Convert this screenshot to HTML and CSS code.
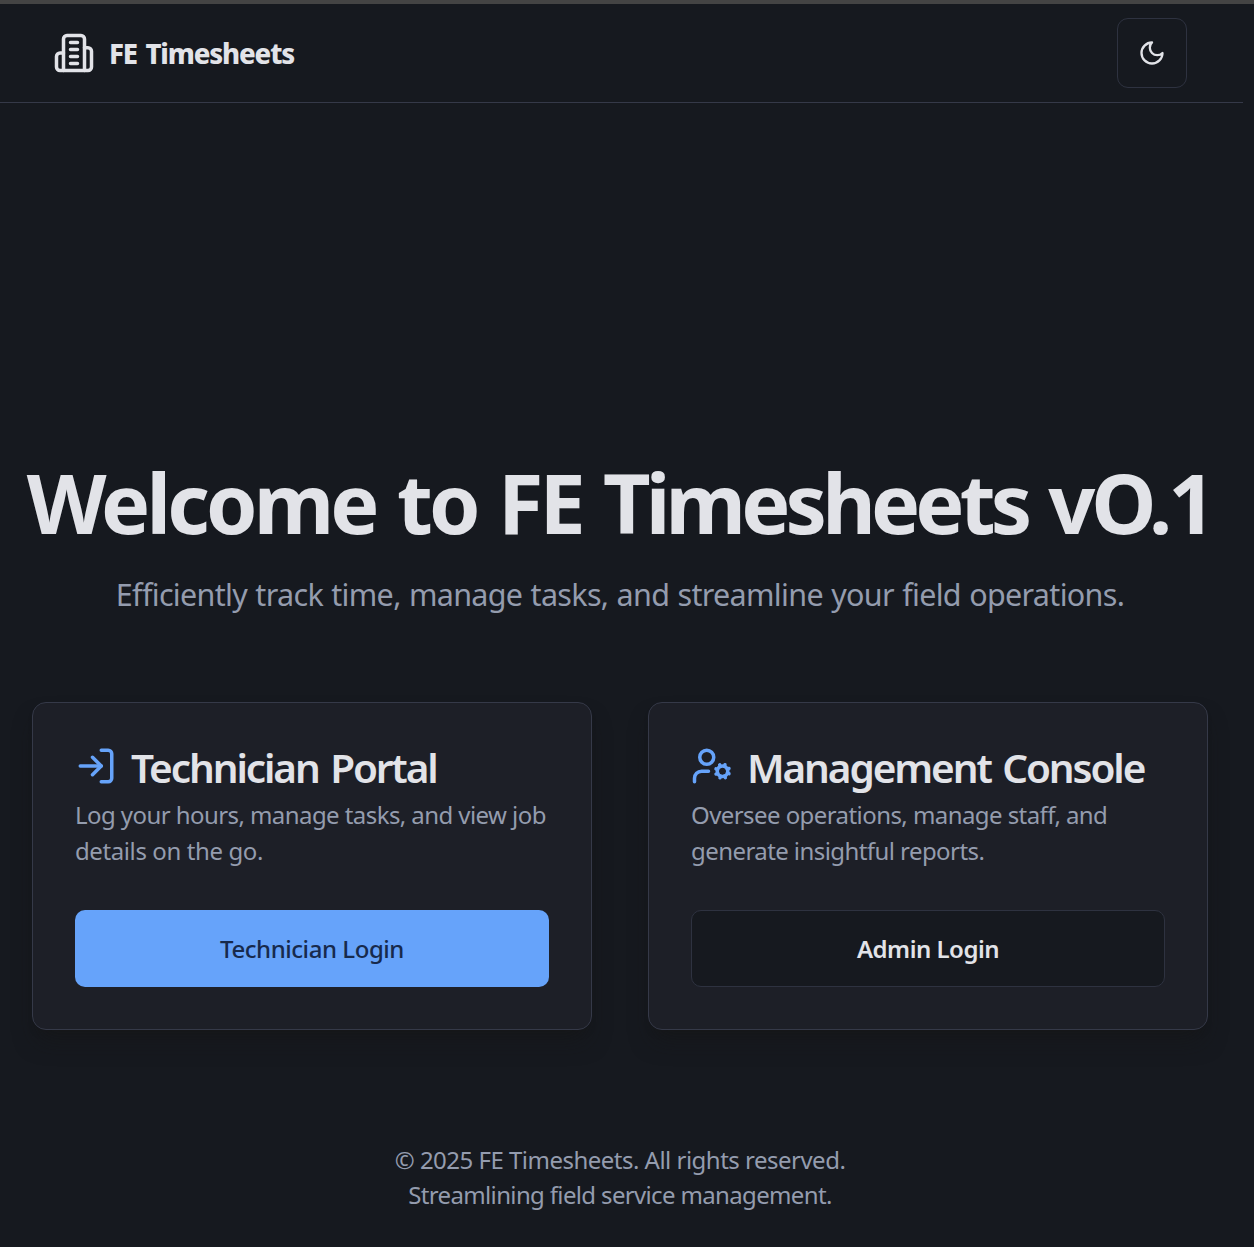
FILE: index.html
```html
<!DOCTYPE html>
<html lang="en">
<head>
<meta charset="utf-8">
<title>FE Timesheets</title>
<link rel="stylesheet" href="styles.css">
</head>
<body>
<div class="page">
  <header class="header">
    <a class="brand">
      <svg class="icon" viewBox="0 0 24 24"><path d="M6 22V4a2 2 0 0 1 2-2h8a2 2 0 0 1 2 2v18Z"/><path d="M6 12H4a2 2 0 0 0-2 2v6a2 2 0 0 0 2 2h2"/><path d="M18 9h2a2 2 0 0 1 2 2v9a2 2 0 0 1-2 2h-2"/><path d="M10 6h4M10 10h4M10 14h4M10 18h4"/></svg>
      <span class="brand-name">FE Timesheets</span>
    </a>
    <button class="theme-toggle" aria-label="Toggle theme">
      <svg class="icon icon-small" viewBox="0 0 24 24"><path d="M12 3a6 6 0 0 0 9 9 9 9 0 1 1-9-9Z"/></svg>
    </button>
  </header>
  <main class="main">
    <h1 class="hero-title"><span class="hero-word">Welcome to FE</span> <span class="hero-product">Timesheets</span> vO.1</h1>
    <p class="hero-text">Efficiently track time, manage tasks, and streamline your field operations.</p>
    <div class="cards">
      <section class="card">
        <h2 class="card-title">
          <svg class="icon accent" viewBox="0 0 24 24"><path d="M15 3h4a2 2 0 0 1 2 2v14a2 2 0 0 1-2 2h-4"/><path d="m10 17 5-5-5-5"/><path d="M15 12H3"/></svg>
          <span class="card-name">Technician Portal</span>
        </h2>
        <p class="card-text">Log your hours, manage tasks, and view job<br><span class="loose">details on the go.</span></p>
        <button class="button primary">Technician Login</button>
      </section>
      <section class="card">
        <h2 class="card-title">
          <svg class="icon accent" viewBox="0 0 24 24"><circle cx="18" cy="15" r="3"/><circle cx="9" cy="7" r="4"/><path d="M10 15H6a4 4 0 0 0-4 4v2"/><path d="m21.7 16.4-.9-.3M15.2 13.9l-.9-.3M16.6 18.7l.3-.9M19.1 12.2l.3-.9M19.6 18.7l-.4-1M16.8 12.3l-.4-1M14.3 16.6l1-.4M20.7 13.8l1-.4"/></svg>
          <span class="card-name">Management Console</span>
        </h2>
        <p class="card-text">Oversee operations, manage staff, and<br>generate insightful reports.</p>
        <button class="button outline">Admin Login</button>
      </section>
    </div>
  </main>
  <footer class="footer">
    <p>© 2025 FE Timesheets. All rights reserved.</p>
    <p class="tight">Streamlining field service management.</p>
  </footer>
</div>
</body>
</html>
```

FILE: styles.css
```css
* { box-sizing: border-box; margin: 0; padding: 0; }
body {
  background: #16191f;
  color: #e2e3e8;
  font-family: "Noto Sans", "Open Sans", sans-serif;
}
.page {
  display: flex;
  flex-direction: column;
  width: 1254px;
  height: 1247px;
  padding-right: 11px;
  border-top: 4px solid #444444;
  overflow: hidden;
}
.header {
  display: flex;
  flex: none;
  align-items: center;
  justify-content: space-between;
  height: 99px;
  padding: 0 56px 0 53px;
  border-bottom: 1px solid #353948;
}
.brand { display: flex; align-items: center; gap: 14px; }
.brand-name {
  padding-top: 1px;
  font-size: 27.5px;
  font-weight: 800;
  letter-spacing: -1.15px;
  word-spacing: 2.5px;
}
.icon {
  flex: none;
  width: 42px;
  height: 42px;
  fill: none;
  stroke: currentColor;
  stroke-width: 2;
  stroke-linecap: round;
  stroke-linejoin: round;
}
.icon-small { width: 28px; height: 28px; }
.accent { color: #66a3fa; }
.theme-toggle {
  display: flex;
  align-items: center;
  justify-content: center;
  width: 70px;
  height: 70px;
  background: #16191f;
  border: 1px solid #2e3240;
  border-radius: 11px;
  color: inherit;
}
.main { padding: 357px 35px 0 32px; }
.hero-title {
  margin: 0 -19px 0 -21px;
  font-size: 82.5px;
  font-weight: 700;
  line-height: 84px;
  letter-spacing: -4.15px;
  word-spacing: 3.8px;
  text-align: center;
  white-space: nowrap;
}
.hero-word { letter-spacing: -3.85px; }
.hero-product { letter-spacing: -4.85px; }
.hero-text {
  margin-top: 26px;
  color: #949cae;
  font-size: 30.5px;
  line-height: 49px;
  letter-spacing: -0.68px;
  word-spacing: 1px;
  text-align: center;
  white-space: nowrap;
}
.cards {
  display: grid;
  grid-template-columns: repeat(2, minmax(0, 1fr));
  gap: 56px;
  margin-top: 83px;
}
.card {
  height: 328px;
  padding: 42px;
  background: #1d1f27;
  border: 1px solid #353948;
  border-radius: 14px;
  box-shadow: 0 15px 22px -5px rgba(22, 22, 22, 0.5), 0 6px 9px -6px rgba(22, 22, 22, 0.5);
  white-space: nowrap;
}
.card-title {
  display: flex;
  align-items: center;
  gap: 14px;
  height: 42px;
  font-size: 40.5px;
  font-weight: 600;
  line-height: 42px;
  letter-spacing: -2.1px;
  word-spacing: 3px;
}
.card-name { padding-top: 3px; }
.card-text {
  margin-top: 10px;
  color: #949cae;
  font-size: 24px;
  line-height: 36px;
  letter-spacing: -0.57px;
}
.loose { letter-spacing: -0.4px; }
.button {
  display: block;
  width: 100%;
  height: 77px;
  margin-top: 41px;
  border: 0;
  border-radius: 10px;
  font: 500 24px "Noto Sans", "Open Sans", sans-serif;
}
.primary { background: #66a3fa; color: #172a4c; letter-spacing: -0.45px; }
.outline {
  background: #16191f;
  border: 1px solid #2e3240;
  color: #e2e3e8;
  font-weight: 600;
  letter-spacing: -0.5px;
}
.footer {
  margin-top: 112px;
  padding-right: 3px;
  color: #949cae;
  font-size: 24px;
  line-height: 35px;
  letter-spacing: -0.51px;
  text-align: center;
}
.tight { letter-spacing: -0.65px; }
```
